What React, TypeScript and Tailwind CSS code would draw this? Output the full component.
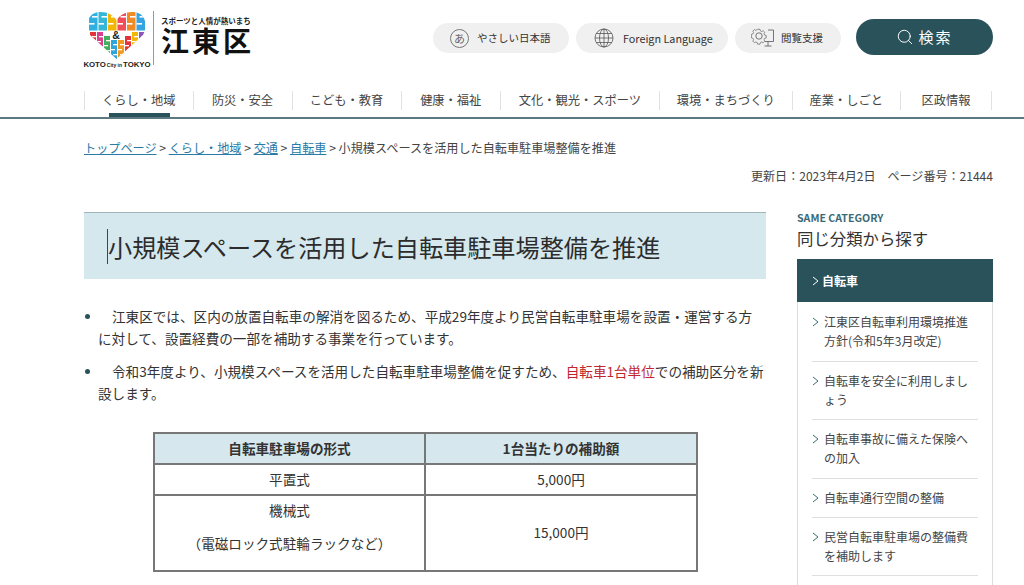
import { Search } from "lucide-react";

const FONT = "[font-family:'Noto_Sans_CJK_JP','Noto_Sans',sans-serif]";

const NAV = [
  { t: "くらし・地域", w: "w-[109.5px]", active: true },
  { t: "防災・安全", w: "w-[99px]" },
  { t: "こども・教育", w: "w-[109px]" },
  { t: "健康・福祉", w: "w-[99.5px]" },
  { t: "文化・観光・スポーツ", w: "w-[159px]" },
  { t: "環境・まちづくり", w: "w-[132.5px]" },
  { t: "産業・しごと", w: "w-[108.5px]" },
  { t: "区政情報", w: "w-[91px]" },
];

const SIDE = [
  { l: ["江東区自転車利用環境推進", "方針(令和5年3月改定)"], h: "h-[60px]" },
  { l: ["自転車を安全に利用しまし", "ょう"], h: "h-[58px]" },
  { l: ["自転車事故に備えた保険へ", "の加入"], h: "h-[58.5px]" },
  { l: ["自転車通行空間の整備"], h: "h-[39px]" },
  { l: ["民営自転車駐車場の整備費", "を補助します"], h: "h-[58px]" },
];

function Chevron({ color }: { color: string }) {
  return (
    <svg width="7" height="10" viewBox="0 0 7 10" fill="none" className="shrink-0">
      <path d="M1 1l5 4-5 4" stroke={color} strokeWidth="1" />
    </svg>
  );
}

function Logo() {
  const top: [number, string][] = [
    [2, "#2fb0e0"],
    [11.500, "#35b8d8"],
    [21, "#f2b705"],
    [30.500, "#ef4d5c"],
    [40, "#f08a24"],
    [49.500, "#35a4e0"],
  ];
  const bottom: [number, string, number][] = [
    [3, "#e2343a", 21],
    [10, "#d93f8d", 21],
    [17, "#43b05c", 25],
    [24, "#2fa6d8", 29],
    [31, "#f29a1f", 29],
    [38, "#e2343a", 25],
    [45, "#f2b705", 21],
    [52, "#8a58b8", 21],
  ];
  return (
    <svg width="60" height="48" viewBox="0 0 60 48" className="block">
      <defs>
        <clipPath id="heart">
          <path d="M29.500 48L3 24C-2 15 0 2 12 1c8-.6 14 3 17.500 8 3.500-5 9.500-8.600 17.500-8 12 1 14 14 9 23z" />
        </clipPath>
      </defs>
      <g clipPath="url(#heart)">
        {top.map(([x, f], i) => (
          <g key={i}>
            <rect x={x} y="0" width="8.500" height="19.500" fill={f} />
            <rect x={x + 3} y="5" width="5.500" height="1.600" fill="#fff" />
            <rect x={x} y="12" width="5.500" height="1.600" fill="#fff" />
          </g>
        ))}
        {bottom.map(([x, f, y], i) => (
          <g key={i}>
            <rect x={x} y={y} width="6" height={48 - y} fill={f} />
            <rect x={x + 2} y={y + 4} width="4" height="1.300" fill="#fff" />
            <rect x={x} y={y + 9} width="4" height="1.300" fill="#fff" />
            <rect x={x + 2} y={y + 14} width="4" height="1.300" fill="#fff" />
          </g>
        ))}
      </g>
      <text x="29" y="28" textAnchor="middle" fontFamily="'Liberation Sans'" fontWeight="700" fontSize="10.500" fill="#222">
        &amp;
      </text>
    </svg>
  );
}

function GlobeIcon() {
  return (
    <svg width="20" height="20" viewBox="0 0 20 20" fill="none" stroke="#555" strokeWidth="0.8" className="shrink-0">
      <circle cx="10" cy="10" r="9" />
      <ellipse cx="10" cy="10" rx="4.500" ry="9" />
      <path d="M10 1v18M1 10h18M2.200 5.500h15.600M2.200 14.500h15.600" />
    </svg>
  );
}

function GearMonitor() {
  return (
    <svg width="24" height="20" viewBox="0 0 24 20" fill="none" stroke="#555" strokeWidth="0.8" className="shrink-0">
      <path d="M7 1h3l.5 2 1.700.8 1.800-1 2 2-1 1.800.8 1.700 2 .5v3l-2 .5-.8 1.700 1 1.800-2 2-1.800-1-1.700.8-.5 2H7l-.5-2-1.700-.8-1.800 1-2-2 1-1.800-.8-1.700-2-.5V7.300l2-.5.8-1.700-1-1.800 2-2 1.800 1 1.700-.8z" transform="translate(1 .5) scale(.8)" />
      <circle cx="8" cy="8" r="3.200" />
      <path d="M17 2h5.500v11.500H14M17 13.500v4.500M13.500 18h7" />
    </svg>
  );
}

export default function App() {
  return (
    <div className={`${FONT} w-[1024px] h-[585px] overflow-hidden bg-white text-[#333]`}>
      {/* Header */}
      <header className="h-[91px] pl-[84px] pr-[31px] flex justify-between">
        <div className="flex pt-[11px] h-[70px]">
          <div className="w-[66px] flex flex-col items-center">
            <Logo />
            <div className="font-['Liberation_Sans'] font-bold text-[7.800px] leading-[9px] mt-[1px] whitespace-nowrap text-[#222] flex items-baseline">
              KOTO<span className="text-[5px] mx-[1px]">City in</span>TOKYO
            </div>
          </div>
          <div className="w-px h-[54px] bg-[#999] ml-[3px]" />
          <div className="ml-[7px] flex flex-col">
            <div className="text-[7.500px] leading-[10px] mt-[5px] font-bold text-[#222] whitespace-nowrap">スポーツと人情が熱いまち</div>
            <div className="text-[28px] leading-[28px] font-bold tracking-[3px] text-[#111] whitespace-nowrap">江東区</div>
          </div>
        </div>
        <div className="flex items-start pt-[19px]">
          <button className="mt-[4px] h-[30px] w-[136px] rounded-full bg-[#f0f0f0] flex items-center pl-[17px] text-[10.500px] text-[#333]">
            <span className="w-[19px] h-[19px] rounded-full border border-[#777] flex items-center justify-center text-[11px] leading-none text-[#666]">あ</span>
            <span className="ml-[8px] whitespace-nowrap">やさしい日本語</span>
          </button>
          <button className="mt-[4px] ml-[7px] h-[30px] w-[152px] rounded-full bg-[#f0f0f0] flex items-center pl-[18px] text-[10.800px] text-[#333]">
            <GlobeIcon />
            <span className="ml-[9px] whitespace-nowrap">Foreign Language</span>
          </button>
          <button className="mt-[4px] ml-[7px] h-[30px] w-[106px] rounded-full bg-[#f0f0f0] flex items-center pl-[16px] text-[10.500px] text-[#333]">
            <GearMonitor />
            <span className="ml-[6px] whitespace-nowrap">閲覧支援</span>
          </button>
          <button className="ml-[15px] h-[36px] w-[137px] rounded-full bg-[#2a525a] flex items-center justify-center text-white text-[15px] tracking-[2px]">
            <Search size={18} strokeWidth={1.300} />
            <span className="ml-[4px] whitespace-nowrap">検索</span>
          </button>
        </div>
      </header>

      {/* Nav */}
      <nav className="h-[28px] border-b-2 border-[#5b7a80] pl-[84px] flex items-start">
        {NAV.map((n, i) => (
          <div
            key={n.t}
            className={`${n.w} relative h-[19px] border-r border-[#e2e2e2] ${i === 0 ? "border-l" : ""} flex items-center justify-center text-[12.250px] leading-[19px] whitespace-nowrap text-[#444]`}
          >
            {n.t}
            {n.active && <span className="absolute left-[24px] top-[22px] w-[61px] h-[4px] bg-[#2a525a]" />}
          </div>
        ))}
      </nav>

      {/* Crumbs */}
      <div className="pl-[84px] pt-[19px] text-[12.130px] leading-[19px] text-[#444] whitespace-nowrap">
        <a className="text-[#2a7aa8] underline">トップページ</a> &gt; <a className="text-[#2a7aa8] underline">くらし・地域</a> &gt;{" "}
        <a className="text-[#2a7aa8] underline">交通</a> &gt; <a className="text-[#2a7aa8] underline">自転車</a> &gt; 小規模スペースを活用した自転車駐車場整備を推進
      </div>
      <div className="pr-[31px] pt-[9px] text-right text-[12.050px] leading-[19px] text-[#444]">更新日：2023年4月2日　ページ番号：21444</div>

      {/* Main */}
      <div className="pl-[84px] pr-[31px] pt-[27px] flex justify-between items-start">
        <main className="w-[682px]">
          <div className="h-[67px] bg-[#d5e8ee] border-t border-[#9fb5ba] pl-[23px] flex items-center">
            <span className="w-px h-[35px] bg-[#444] shrink-0" />
            <h1 className="text-[24.150px] leading-[35px] text-[#2c2c2c] whitespace-nowrap">小規模スペースを活用した自転車駐車場整備を推進</h1>
          </div>
          <ul className="mt-[26px] text-[13.600px] leading-[22px] text-[#333]">
            <li className="relative pl-[14px] pr-[2px] mb-[11px] indent-[14px]">
              <span className="absolute left-[1px] top-[9px] w-[5px] h-[5px] rounded-full bg-[#2a525a]" />
              江東区では、区内の放置自転車の解消を図るため、平成29年度より民営自転車駐車場を設置・運営する方に対して、設置経費の一部を補助する事業を行っています。
            </li>
            <li className="relative pl-[14px] indent-[14px]">
              <span className="absolute left-[1px] top-[9px] w-[5px] h-[5px] rounded-full bg-[#2a525a]" />
              令和3年度より、小規模スペースを活用した自転車駐車場整備を促すため、<span className="text-[#c0262d]">自転車1台単位</span>での補助区分を新設します。
            </li>
          </ul>
          <table className="mt-[28px] ml-[69px] w-[545px] table-fixed border-collapse text-[13.600px] text-center text-[#333] border-2 border-[#777]">
            <colgroup>
              <col className="w-[271px]" />
              <col />
            </colgroup>
            <tbody>
              <tr className="h-[31px] bg-[#d6e7ee] font-bold">
                <td className="border-2 border-[#777]">自転車駐車場の形式</td>
                <td className="border-2 border-[#777]">1台当たりの補助額</td>
              </tr>
              <tr className="h-[31px]">
                <td className="border-2 border-[#777]">平置式</td>
                <td className="border-2 border-[#777]">5,000円</td>
              </tr>
              <tr className="h-[76px]">
                <td className="border-2 border-[#777] leading-[33px] align-top">
                  <div className="-mt-[2px]">
                    機械式
                    <br />
                    （電磁ロック式駐輪ラックなど）
                  </div>
                </td>
                <td className="border-2 border-[#777] pb-[1px]">15,000円</td>
              </tr>
            </tbody>
          </table>
        </main>

        {/* Sidebar */}
        <aside className="w-[196px] -mt-[1px]">
          <div className="text-[10.600px] leading-[14px] font-bold text-[#3a6a75] whitespace-nowrap">SAME CATEGORY</div>
          <div className="text-[16.400px] leading-[24px] mt-[1px] text-[#333] whitespace-nowrap">同じ分類から探す</div>
          <div className="mt-[9px] border border-[#dcdcdc] border-t-0 h-[400px]">
            <div className="h-[43px] -mx-px bg-[#2a525a] flex items-center pl-[15px] gap-[3px] text-white text-[12px] font-bold">
              <Chevron color="#fff" />
              自転車
            </div>
            <div className="px-[14px]">
              {SIDE.map((s) => (
                <div key={s.l[0]} className={`${s.h} border-b border-[#dfdfdf] flex items-center`}>
                  <div className="flex gap-[5px] w-full -mt-[1px]">
                    <span className="pt-[5px]">
                      <Chevron color="#3a6a75" />
                    </span>
                    <div className="text-[12px] leading-[19px] text-[#444] whitespace-nowrap">
                      {s.l.map((x) => (
                        <div key={x}>{x}</div>
                      ))}
                    </div>
                  </div>
                </div>
              ))}
            </div>
          </div>
        </aside>
      </div>
    </div>
  );
}
